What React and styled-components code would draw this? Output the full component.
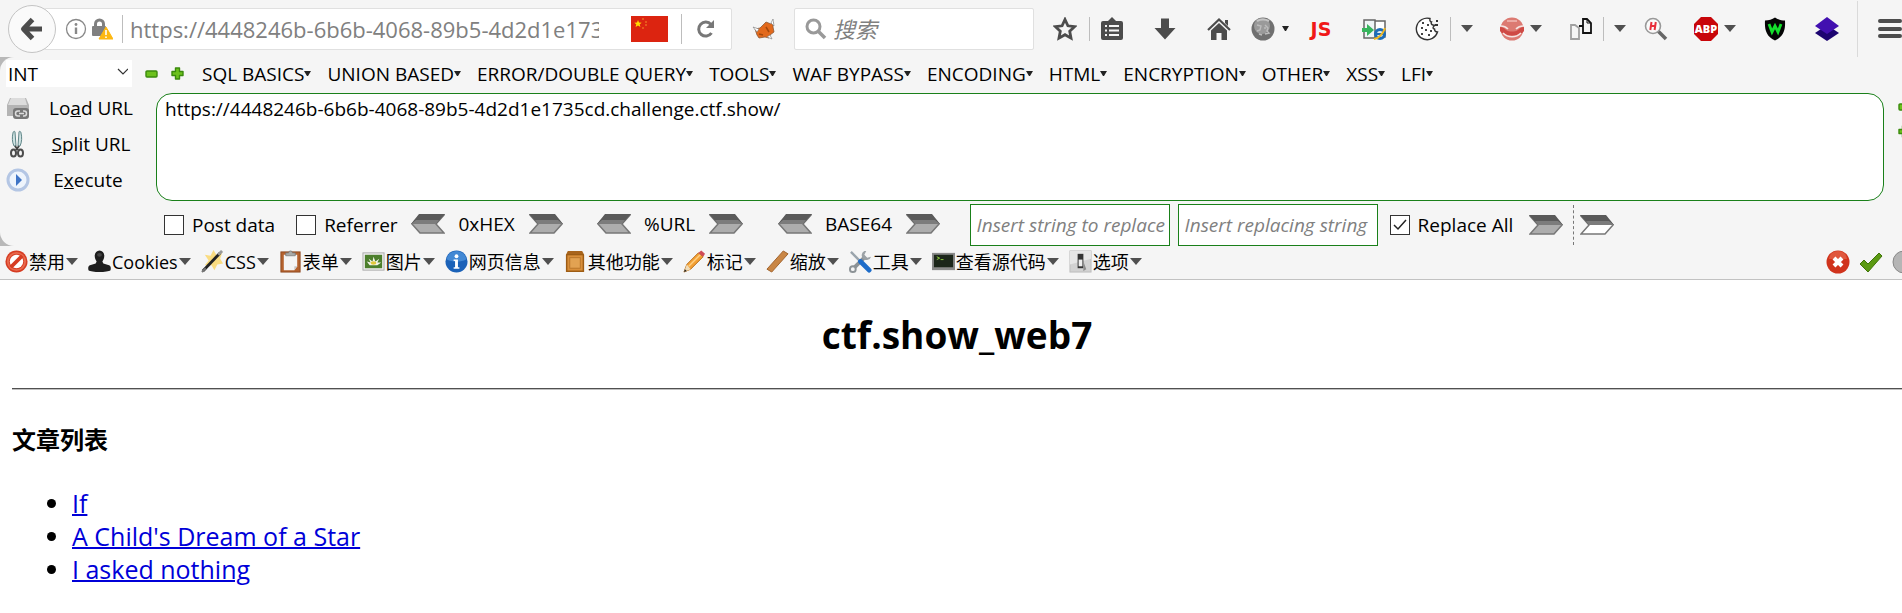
import React from "react";
import styled, { createGlobalStyle } from "styled-components";

const Global = createGlobalStyle`
  * { box-sizing: border-box; }
  body { margin: 0; background: #fff; overflow-x: hidden; font-family: "Open Sans", "Noto Sans CJK SC", sans-serif; color: #000; }
  button, input, select, textarea { font-family: inherit; color: inherit; }
  svg { display: block; flex: none; }
`;

/* ---------- shared parts ---------- */
const PlainButton = styled.button`
  display: flex;
  align-items: center;
  flex: none;
  padding: 0;
  border: 0;
  background: none;
  font-size: 19px;
  line-height: 24px;
  white-space: nowrap;
`;

const Chrome = styled.header`
  background: #f5f5f5;
  border-bottom: 1px solid #c2c2c2;
  overflow: hidden;
`;

/* ---------- navigation bar ---------- */
const NavBar = styled.div`
  display: flex;
  align-items: center;
  height: 57px;
  padding-left: 8px;
`;
const BackButton = styled.button`
  display: grid;
  place-items: center;
  width: 48px;
  height: 48px;
  flex: none;
  padding: 0;
  border: 1px solid #c4c4c4;
  border-radius: 50%;
  background: #fafafa;
  z-index: 1;
`;
const UrlBox = styled.div`
  display: flex;
  align-items: center;
  flex: 1;
  min-width: 0;
  height: 42px;
  margin-left: -12px;
  padding-left: 20px;
  border: 1px solid #e0e0e0;
  border-radius: 2px;
  background: #fff;
`;
const Divider = styled.span`
  flex: none;
  width: 1px;
  height: ${(p) => p.$h || 24}px;
  margin-left: ${(p) => p.$ml || 0}px;
  background: ${(p) => p.$color || "#bdbdbd"};
`;
const UrlInput = styled.input`
  flex: 1;
  min-width: 0;
  margin: 0 32px 0 7px;
  padding: 0;
  border: 0;
  background: none;
  font-size: 22px;
  line-height: 30px;
  color: #808080;
  outline: none;
`;
const ReloadButton = styled(PlainButton)`
  margin: 0 15px 0 14px;
`;
const SearchBox = styled.label`
  display: flex;
  align-items: center;
  gap: 6px;
  flex: none;
  width: 240px;
  height: 42px;
  margin-left: 18px;
  padding-left: 10px;
  border: 1px solid #e0e0e0;
  border-radius: 2px;
  background: #fff;
`;
const SearchInput = styled.input`
  flex: 1;
  min-width: 0;
  padding: 0;
  border: 0;
  background: none;
  font-size: 22px;
  outline: none;
  &::placeholder { color: #808080; font-style: italic; opacity: 1; }
`;
const NavButton = styled(PlainButton)`
  margin-left: ${(p) => p.$ml}px;
`;
const JsMark = styled.span`
  width: 24px;
  text-align: center;
  font: 700 19px/24px "DejaVu Sans", sans-serif;
  color: #f01818;
`;

/* ---------- hackbar ---------- */
const BarFrame = styled.section`
  background: #b8b8b8;
`;
const Bar = styled.div`
  background: #f5f5f5;
  border-radius: 14px 0 0 14px;
`;
const MenuRow = styled.div`
  display: flex;
  align-items: center;
  height: 36px;
  padding: 3px 0 6px 6px;
`;
const SelectWrap = styled.label`
  position: relative;
  flex: none;
  svg { position: absolute; right: 4px; top: 8px; pointer-events: none; }
`;
const TypeSelect = styled.select`
  display: block;
  width: 126px;
  height: 27px;
  padding: 0 2px;
  border: 0;
  appearance: none;
  background: #fff;
  font-size: 19px;
`;
const Menu = styled(PlainButton)`
  margin-right: 16px;
`;
const MenuList = styled.nav`
  display: flex;
  margin-left: 18px;
`;
const EditorRow = styled.div`
  display: grid;
  grid-template-columns: 150px minmax(0, 1fr) 18px;
  padding-left: 6px;
`;
const ActionList = styled.div`
  display: flex;
  flex-direction: column;
  gap: 12px;
  padding: 3px 0;
`;
const Action = styled(PlainButton)`
  width: 127px;
  height: 24px;
`;
const ActionLabel = styled.span`
  flex: 1;
  padding-left: ${(p) => p.$pad}px;
  text-align: center;
`;
const UrlArea = styled.textarea`
  display: block;
  width: 100%;
  height: 108px;
  padding: 3px 8px;
  border: 1px solid #1a801a;
  border-radius: 16px;
  background: #fff;
  font-size: 19px;
  line-height: 24px;
  resize: none;
  outline: none;
`;
const SideTools = styled.div`
  display: flex;
  flex-direction: column;
  gap: 12px;
  padding: 7px 0 0 14px;
  overflow: hidden;
`;
const OptionRow = styled.div`
  display: flex;
  align-items: center;
  height: 45px;
  padding: 2px 0 0 164px;
`;
const Check = styled.label`
  display: flex;
  align-items: center;
  gap: 8px;
  flex: none;
  margin-right: ${(p) => p.$mr}px;
  font-size: 19px;
  line-height: 24px;
  white-space: nowrap;
`;
const Tick = styled.input`
  appearance: none;
  width: 20px;
  height: 20px;
  margin: 0;
  border: 1px solid #333;
  background: #fff;
  &:checked {
    background: #fff url("data:image/svg+xml,%3Csvg xmlns='http://www.w3.org/2000/svg' viewBox='0 0 18 18'%3E%3Cpath d='M3 9l4 4 8-9' fill='none' stroke='%23222' stroke-width='1.5'/%3E%3C/svg%3E");
  }
`;
const Codec = styled.div`
  display: grid;
  grid-template-columns: 34px ${(p) => p.$w}px 34px;
  align-items: center;
  flex: none;
  margin-right: ${(p) => p.$mr}px;
  padding-bottom: 2px;
  text-align: center;
  font-size: 19px;
  line-height: 24px;
`;
const ReplaceInput = styled.input`
  flex: none;
  width: 200px;
  height: 42px;
  margin-right: ${(p) => p.$mr}px;
  padding: 0 0 0 6px;
  border: 1px solid #1a801a;
  background: #fff;
  font-size: 19px;
  outline: none;
  &::placeholder { color: #808080; font-style: italic; opacity: 1; }
`;
const Dashed = styled.span`
  flex: none;
  height: 40px;
  margin: 0 6px 0 10px;
  border-left: 1px dashed #777;
`;

/* ---------- developer toolbar ---------- */
const DevBar = styled.div`
  display: flex;
  align-items: center;
  height: 33px;
  padding: 0 0 2px 5px;
`;
const DevItem = styled(PlainButton)`
  gap: 1px;
  margin-right: 10px;
  font-size: 18px;
`;
const Status = styled.div`
  display: flex;
  gap: 9px;
  flex: none;
  width: 76px;
  margin-left: auto;
  overflow: hidden;
`;

/* ---------- page ---------- */
const Page = styled.main`
  padding: 0 0 24px 12px;
  font-size: 25px;
  line-height: 33px;
`;
const Title = styled.h1`
  margin: 0;
  padding: 30px 0 29px;
  text-align: center;
  font-size: 37px;
  line-height: 49px;
`;
const Rule = styled.hr`
  margin: 0;
  border: 0;
  border-top: 1px solid #505050;
  border-bottom: 1px solid #c0c0c0;
`;
const Heading = styled.h2`
  margin: 33px 0 31px;
  font-size: 24px;
  line-height: 33px;
`;
const Articles = styled.ul`
  margin: 0;
  padding-left: 60px;
  a { color: #0000d8; text-decoration-thickness: 2px; }
`;

/* ---------- icons ---------- */
const Svg = ({ w = 24, h = 24, vb, children }) => (
  <svg width={w} height={h} viewBox={vb || `0 0 ${w} ${h}`} aria-hidden="true">{children}</svg>
);
const Caret = () => <Svg w={12} h={7}><path d="M0 0h12L6 7z" fill="#505050" /></Svg>;
const SmallCaret = () => <Svg w={7} h={5}><path d="M0 0h7L4 5H3z" fill="#222" /></Svg>;
const Minus = () => <Svg w={13} h={13}><rect x="1" y="4" width="11" height="6" rx="1" fill="#6cc11c" stroke="#3a8a0c" strokeWidth="1.4" /></Svg>;
const Plus = () => <Svg w={13} h={13}><path d="M4.500 1h4v3.500H12v4H8.500V12h-4V8.500H1v-4h3.500z" fill="#6cc11c" stroke="#3a8a0c" strokeWidth="1.4" strokeLinejoin="round" /></Svg>;
const Chevron = ({ left, hollow }) => (
  <Svg w={34} h={20}>
    <g transform={left ? "translate(34 0) scale(-1 1)" : undefined}>
      <path d="M1 1h24l8 9-8 9H1l8-9z" fill={hollow ? "#fff" : "#adadad"} stroke="#777" strokeWidth="1.500" />
      <path d="M0 0h26l8 10H9z" fill="#5a5a5a" />
      <path d="M6 6h23l5 4H9z" fill="#7c7c7c" />
    </g>
  </Svg>
);

const devIcons = {
  forbid: (
    <>
      <circle cx="12" cy="12" r="11.500" fill="#d63c22" />
      <circle cx="12" cy="12" r="7" fill="#fff" />
      <circle cx="12" cy="12" r="9" fill="none" stroke="#e8694d" strokeWidth="2" />
      <path d="M6 18L18 6" stroke="#d63c22" strokeWidth="4" />
    </>
  ),
  user: (
    <>
      <path d="M7 6a5 5.500 0 0 1 10 0c0 3-1 4-2 6l1 2 6 2c2 1 2 3 1.500 5-3 2.500-20 2.500-23 0-.5-2-.5-4 1.500-5l6-2 1-2c-1-2-2-3-2-6z" fill="#1e1e1e" />
      <ellipse cx="12" cy="5" rx="2.500" ry="2" fill="#444" />
    </>
  ),
  wand: (
    <>
      <path d="M13 0l3 5 6-2-2 6 3 5-6 1-3 6-3-5-7 0 4-5-4-6 6 1z" fill="#fbd35a" opacity=".75" />
      <path d="M2 22L20 3" stroke="#222" strokeWidth="3" />
      <path d="M18 5l4-4" stroke="#999" strokeWidth="3" />
      <path d="M1 23l4-4" stroke="#777" strokeWidth="2" />
    </>
  ),
  clipboard: (
    <>
      <rect x="2" y="2" width="20" height="21" fill="#b5622e" stroke="#8f4a20" />
      <path d="M5 5h14v12l-3 4H5z" fill="#f4f4f4" />
      <path d="M19 17h-3v4z" fill="#c4c4c4" />
      <path d="M7 6V3h3a2 2 0 0 1 4 0h3v3z" fill="#a8aaa8" stroke="#777" strokeWidth=".8" />
    </>
  ),
  image: (
    <>
      <rect x="1" y="3" width="22" height="18" fill="#eee" stroke="#aaa" />
      <rect x="3" y="5" width="18" height="14" fill="#4c7f2c" />
      <path d="M5 12l4 1-2-4 4 3 1-5 2 5 4-3-2 4 4 0-4 3H8z" fill="#f4f4ea" />
      <ellipse cx="12" cy="13.500" rx="3" ry="1.800" fill="#e2c93c" />
    </>
  ),
  info: (
    <>
      <circle cx="12" cy="12" r="11.500" fill="#1b62b8" />
      <path d="M2 10a10 9 0 0 1 20 0c-5 3-15 3-20 0z" fill="#4288d4" />
      <circle cx="12" cy="6.500" r="2" fill="#fff" />
      <path d="M9 10h4.500v8H15v1.500H9V18h1.500v-6.500H9z" fill="#fff" />
    </>
  ),
  box: (
    <>
      <path d="M4 1h15l2 4v18H2V5z" fill="#a8641c" />
      <rect x="3" y="5" width="17" height="17" fill="#d98f3a" stroke="#93540f" />
      <rect x="6" y="8" width="11" height="11" fill="#e2a252" stroke="#b8752a" />
    </>
  ),
  pencil: (
    <>
      <path d="M1 23l3-8L16 3l5 4L8 20z" fill="#f3a034" stroke="#b56b16" />
      <path d="M1 23l3-8 4 5z" fill="#f0dcb8" />
      <path d="M6 17L18 5" stroke="#ffd083" strokeWidth="1.500" />
      <path d="M16 3l3-2.500L23 4l-2 3z" fill="#cf4c58" />
      <path d="M1 23l1-3 2 2z" fill="#222" />
    </>
  ),
  ruler: <path d="M1 20L18 1l5 3L6 23z" fill="#c98645" stroke="#a0622c" />,
  tools: (
    <>
      <path d="M5 19L17 7" stroke="#8c9296" strokeWidth="4" />
      <circle cx="4" cy="20" r="3" fill="#f5f5f5" stroke="#8c9296" strokeWidth="2" />
      <path d="M16 1a5 5 0 1 0 7 6l-4 1-3-3 2-4z" fill="#9ba1a5" />
      <path d="M2 2l9 9" stroke="#9aa4ac" strokeWidth="2.500" />
      <path d="M12 12l9 9" stroke="#1d6cc9" strokeWidth="5" strokeLinecap="round" />
    </>
  ),
  screen: (
    <>
      <rect x="0" y="3" width="24" height="18" fill="#8a8a8a" />
      <rect x="2" y="5" width="20" height="13" fill="#1c261a" />
      <path d="M5 7l3 1.500L5 10M9 10h3" stroke="#8fd03c" fill="none" />
    </>
  ),
  toggle: (
    <>
      <rect x="1" y="1" width="22" height="22" fill="#d2d2d2" stroke="#bdbdbd" />
      <path d="M1 1h22v8L1 15z" fill="#e6e6e6" />
      <rect x="9" y="4" width="6" height="15" fill="#333" />
      <rect x="10" y="10" width="4" height="7" fill="#eee" />
      <path d="M15 12v10l3-2z" fill="#8c8c8c" />
    </>
  ),
};

const devItems = [
  ["forbid", "禁用"], ["user", "Cookies"], ["wand", "CSS"], ["clipboard", "表单"],
  ["image", "图片"], ["info", "网页信息"], ["box", "其他功能"], ["pencil", "标记"],
  ["ruler", "缩放"], ["tools", "工具"], ["screen", "查看源代码"], ["toggle", "选项"],
];

const menus = ["SQL BASICS", "UNION BASED", "ERROR/DOUBLE QUERY", "TOOLS", "WAF BYPASS", "ENCODING", "HTML", "ENCRYPTION", "OTHER", "XSS", "LFI"];
const target = "https://4448246b-6b6b-4068-89b5-4d2d1e1735cd.challenge.ctf.show/";

function Navigation() {
  return (
    <NavBar>
      <BackButton aria-label="Back">
        <Svg><path d="M12.500 2.500L3.500 12l9 9.500M4 12h18" fill="none" stroke="#4c4c4c" strokeWidth="5" strokeLinejoin="round" /></Svg>
      </BackButton>
      <UrlBox>
        <Svg w={22} h={22}>
          <circle cx="11" cy="11" r="9.500" fill="none" stroke="#888" strokeWidth="1.300" />
          <circle cx="11" cy="6.500" r="1.400" fill="#888" />
          <path d="M11 9.500V16" stroke="#888" strokeWidth="2.400" />
        </Svg>
        <Svg w={26} h={24}>
          <path d="M8.500 11V7a4 4 0 0 1 8 0v4" fill="none" stroke="#808080" strokeWidth="3" />
          <rect x="5" y="9" width="14" height="10" rx="1" fill="#808080" />
          <path d="M19 10l7 12H12z" fill="#fdb813" stroke="#fdb813" strokeLinejoin="round" />
          <path d="M19 13v5M19 19.500v1.500" stroke="#fff" strokeWidth="1.600" />
        </Svg>
        <Divider $h={28} $ml={9} />
        <UrlInput aria-label="Address" defaultValue={target} />
        <Svg w={37} h={26}>
          <rect width="37" height="26" fill="#dc2410" />
          <path d="M7 4l1 2.500 2.700.2-2 1.600.7 2.700L7 9.500 4.600 11l.7-2.700-2-1.600L6 6.500z" fill="#fd0" />
          <path d="M11 3h2M14 6h2M14 9h2M11 12h2" stroke="#ec6a20" strokeWidth="1.500" />
        </Svg>
        <Divider $h={30} $ml={13} />
        <ReloadButton aria-label="Reload">
          <Svg w={20} h={20}>
            <path d="M15.500 14A7 7 0 1 1 15 5.500" fill="none" stroke="#777" strokeWidth="3" />
            <path d="M18 1v8h-8z" fill="#777" />
          </Svg>
        </ReloadButton>
      </UrlBox>
      <NavButton $ml={20} aria-label="FoxyProxy">
        <Svg>
          <path d="M3 12l5-1 6-6 5 2 2-2 0 5 1 5-4 3-1 3-4-1-6 1-2-3z" fill="#e2691c" stroke="#8c5a3a" strokeWidth=".8" />
          <path d="M1 10l6 2-2 3zM19 6l2-4 1 7zM15 20l5 2-2-4z" fill="#fff" stroke="#777" strokeWidth=".6" />
          <path d="M7 17l4 1M14 10l3 5" stroke="#a3480c" strokeWidth="1.500" />
        </Svg>
      </NavButton>
      <SearchBox>
        <Svg w={22} h={22}>
          <circle cx="8.500" cy="8.500" r="6.500" fill="none" stroke="#999" strokeWidth="3" />
          <path d="M13 13l7 7" stroke="#999" strokeWidth="3.500" />
        </Svg>
        <SearchInput aria-label="搜索" placeholder="搜索" />
      </SearchBox>
      <NavButton $ml={19} aria-label="Bookmark">
        <Svg><path d="M12 2.500l2.900 6.300 6.800.8-5 4.700 1.300 6.800-6-3.400-6 3.400 1.300-6.800-5-4.700 6.800-.8z" fill="none" stroke="#4c4c4c" strokeWidth="2.800" /></Svg>
      </NavButton>
      <Divider $ml={12} />
      <NavButton $ml={10} aria-label="Library">
        <Svg>
          <path d="M3 4h5l4-4 4 4h5a2 2 0 0 1 2 2v15a2 2 0 0 1-2 2H3a2 2 0 0 1-2-2V6a2 2 0 0 1 2-2z" fill="#4c4c4c" />
          <path d="M5 9h2M9 9h10M5 13.500h2M9 13.500h10M5 18h2M9 18h10" stroke="#f5f5f5" strokeWidth="2" />
        </Svg>
      </NavButton>
      <NavButton $ml={29} aria-label="Downloads">
        <Svg><path d="M8 1.500h8V11h6.500L12 22.500 1.500 11H8z" fill="#4c4c4c" /></Svg>
      </NavButton>
      <NavButton $ml={30} aria-label="Home">
        <Svg>
          <path d="M1 13L12 2.500 23 13" fill="none" stroke="#4c4c4c" strokeWidth="2.200" />
          <path d="M18 3h3v6l-3-3z" fill="#4c4c4c" />
          <path d="M4 13.500L12 6l8 7.500V23h-5.500v-7h-5v7H4z" fill="#4c4c4c" />
        </Svg>
      </NavButton>
      <NavButton $ml={20} aria-label="Proxy">
        <Svg>
          <circle cx="12" cy="12" r="11.500" fill="#707070" />
          <circle cx="11" cy="9" r="8" fill="#9a9a9a" />
          <path d="M6 8l4 1-1 4-3 1M14 8l3 3-1 3 2 2-4 1M8 17l3 1M13 11h2" fill="none" stroke="#bcbcbc" strokeWidth="1.400" />
          <path d="M6 4c4-2 8-2 12 0" fill="none" stroke="#c4c4c4" strokeWidth="2" />
        </Svg>
      </NavButton>
      <NavButton $ml={7} aria-label="Proxy options"><SmallCaret /></NavButton>
      <NavButton $ml={20} aria-label="JavaScript"><JsMark>JS</JsMark></NavButton>
      <NavButton $ml={29} aria-label="Open in IE">
        <Svg>
          <path d="M11 4h12v16H11z" fill="#fff" stroke="#666" strokeWidth="1.500" />
          <path d="M2 3h11v18H2z" fill="#eef4f6" stroke="#666" strokeWidth="1.500" />
          <path d="M0 11h5V7l7 6-7 6v-4H0z" fill="#36b45c" />
          <circle cx="18" cy="17" r="4.500" fill="#dcebf5" stroke="#1d6cb8" strokeWidth="3" />
          <path d="M15 17h6" stroke="#1d6cb8" strokeWidth="2" />
          <path d="M12 22c4 0 9-5 11-11" fill="none" stroke="#f0b822" strokeWidth="2" />
        </Svg>
      </NavButton>
      <NavButton $ml={29} aria-label="Cookies">
        <Svg>
          <path d="M15 1.500A10.800 10.800 0 1 0 22.500 15c-2 0-3-1-3-3-2 0-2-3 1-4-3 1-5-1-4-3-1 0-2-1-1.500-3.500z" fill="#fff" stroke="#333" strokeWidth="1.400" />
          <path d="M8 5v2M13 7v2M6 11h2M11 12v2M15 14h2M7 16v2M13 18h2" stroke="#444" strokeWidth="2" />
          <path d="M21 3h2v2h-2zM20 7h3v2h-3z" fill="#333" />
        </Svg>
      </NavButton>
      <Divider $ml={11} />
      <NavButton $ml={10} aria-label="More"><Caret /></NavButton>
      <NavButton $ml={27} aria-label="Gesture">
        <Svg>
          <circle cx="12" cy="12" r="11.500" fill="#dc7a72" />
          <path d="M0 10c3 0 4 1 6 3 3 2 9 2 12 0 2-2 3-3 6-3v4c-4 6-20 6-24 0z" fill="#cf4a45" />
          <path d="M1 9c4 0 5 1 7 3M23 9c-4 0-5 1-7 3M3 16c5 5 13 5 18 0" fill="none" stroke="#f6e4e2" strokeWidth="1.600" />
          <path d="M7 4h10" stroke="#ecaaa4" strokeWidth="2" />
        </Svg>
      </NavButton>
      <NavButton $ml={6} aria-label="Gesture options"><Caret /></NavButton>
      <NavButton $ml={26} aria-label="Copy pages">
        <Svg>
          <path d="M3 8h4l4 3v11H3z" fill="none" stroke="#a0a0a0" strokeWidth="1.800" />
          <path d="M15 2h4l4 4v10h-8z" fill="none" stroke="#111" strokeWidth="1.800" />
          <path d="M11 9h4" stroke="#111" strokeWidth="2" />
          <path d="M19 2v4h4" fill="none" stroke="#111" />
        </Svg>
      </NavButton>
      <Divider $ml={11} />
      <NavButton $ml={10} aria-label="More"><Caret /></NavButton>
      <NavButton $ml={18} aria-label="HackSearch">
        <Svg>
          <path d="M14 14l8 8" stroke="#666" strokeWidth="3.500" />
          <circle cx="9" cy="9" r="7.500" fill="#fafafa" stroke="#999" strokeWidth="1.600" />
          <path d="M7.500 5l-1.200 8M11.800 5l-1.200 8M7 9h4" stroke="#e8303c" strokeWidth="2" />
        </Svg>
      </NavButton>
      <NavButton $ml={26} aria-label="Adblock Plus">
        <Svg>
          <path d="M7 0h10l7 7v10l-7 7H7l-7-7V7z" fill="#c8060a" />
          <text x="12" y="16" textAnchor="middle" fontFamily="Open Sans" fontWeight="800" fontSize="11" fill="#fff">ABP</text>
        </Svg>
      </NavButton>
      <NavButton $ml={6} aria-label="Adblock options"><Caret /></NavButton>
      <NavButton $ml={27} aria-label="Wappalyzer">
        <Svg>
          <path d="M12 .5c3 2 6 3 10 3 .5 9-1 16-10 20-9-4-10.500-11-10-20 4 0 7-1 10-3z" fill="#050505" />
          <path d="M6 7l3 8 3-6 3 6 3-8" fill="none" stroke="#14e02c" strokeWidth="2.800" />
        </Svg>
      </NavButton>
      <NavButton $ml={28} aria-label="Layers">
        <Svg>
          <path d="M12 8l12 8-12 8L0 16z" fill="#1c0470" />
          <path d="M12 0l12 9-12 8L0 9z" fill="#4210b0" />
        </Svg>
      </NavButton>
      <Divider $ml={18} $h={56} $color="#dadada" />
      <NavButton $ml={20} aria-label="Menu">
        <Svg><path d="M2 4h20M2 12h20M2 19h20" stroke="#4c4c4c" strokeWidth="4" strokeLinecap="round" /></Svg>
      </NavButton>
    </NavBar>
  );
}

function CodecGroup({ name, w, mr }) {
  return (
    <Codec $w={w} $mr={mr}>
      <PlainButton aria-label={`Decode ${name}`}><Chevron left /></PlainButton>
      <span>{name}</span>
      <PlainButton aria-label={`Encode ${name}`}><Chevron /></PlainButton>
    </Codec>
  );
}

function HackBar() {
  return (
    <BarFrame>
      <Bar>
        <MenuRow>
          <SelectWrap>
            <TypeSelect aria-label="Type"><option>INT</option></TypeSelect>
            <Svg w={11} h={8}><path d="M1 1l5 5 5-5" fill="none" stroke="#333" strokeWidth="1.200" /></Svg>
          </SelectWrap>
          <NavButton $ml={13} aria-label="Remove"><Minus /></NavButton>
          <NavButton $ml={13} aria-label="Add"><Plus /></NavButton>
          <MenuList>
            {menus.map((m) => <Menu key={m}>{m}<SmallCaret /></Menu>)}
          </MenuList>
        </MenuRow>
        <EditorRow>
          <ActionList>
            <Action>
              <Svg>
                <path d="M4 2h16l3 7v11H1V9z" fill="#b4b4b4" />
                <path d="M5 2h14l2 7H2z" fill="#dcdcdc" />
                <rect x="7" y="12" width="16" height="11" rx="3" fill="#777" />
                <path d="M14 15h-2a2.500 2.500 0 0 0 0 5h2M17 15h1a2.500 2.500 0 0 1 0 5h-1M13 17.500h5" fill="none" stroke="#ddd" strokeWidth="1.500" />
              </Svg>
              <ActionLabel $pad={19}>Lo<u>a</u>d URL</ActionLabel>
            </Action>
            <Action>
              <Svg w={24} h={28}>
                <path d="M7 3c0-2 2-2 2-1l1 14H8C6 12 6 7 7 3zM15 3c0-2-2-2-2-1l-1 14h2c2-4 2-9 1-13z" fill="#cfe2e2" stroke="#5f8688" />
                <path d="M9 16l3 4M13 16l-3 4" stroke="#444" strokeWidth="2" />
                <ellipse cx="7.500" cy="23" rx="2.500" ry="3.500" fill="none" stroke="#4c4c4c" strokeWidth="2" />
                <ellipse cx="14.500" cy="23" rx="2.500" ry="3.500" fill="none" stroke="#4c4c4c" strokeWidth="2" />
              </Svg>
              <ActionLabel $pad={19}><u>S</u>plit URL</ActionLabel>
            </Action>
            <Action>
              <Svg>
                <circle cx="12" cy="12" r="10" fill="#eef4fc" stroke="#b4c6e4" strokeWidth="3" />
                <path d="M10 6l6 6-6 6z" fill="#3f74c6" />
              </Svg>
              <ActionLabel $pad={13}>E<u>x</u>ecute</ActionLabel>
            </Action>
          </ActionList>
          <UrlArea aria-label="URL" defaultValue={target} spellCheck={false} />
          <SideTools>
            <PlainButton aria-label="Shrink"><Minus /></PlainButton>
            <PlainButton aria-label="Grow"><Plus /></PlainButton>
          </SideTools>
        </EditorRow>
        <OptionRow>
          <Check $mr={21}><Tick type="checkbox" />Post data</Check>
          <Check $mr={13}><Tick type="checkbox" />Referrer</Check>
          <CodecGroup name="0xHEX" w={84} mr={34} />
          <CodecGroup name="%URL" w={78} mr={35} />
          <CodecGroup name="BASE64" w={94} mr={30} />
          <ReplaceInput aria-label="Search string" placeholder="Insert string to replace" $mr={8} />
          <ReplaceInput aria-label="Replacement string" placeholder="Insert replacing string" $mr={12} />
          <Check $mr={16}><Tick type="checkbox" defaultChecked />Replace All</Check>
          <PlainButton aria-label="Replace"><Chevron /></PlainButton>
          <Dashed />
          <PlainButton aria-label="Replace and run"><Chevron hollow /></PlainButton>
        </OptionRow>
      </Bar>
    </BarFrame>
  );
}

function DeveloperBar() {
  return (
    <DevBar>
      {devItems.map(([icon, label]) => (
        <DevItem key={icon}>
          <Svg w={23} h={23} vb="0 0 24 24">{devIcons[icon]}</Svg>
          {label}
          <Caret />
        </DevItem>
      ))}
      <Status>
        <PlainButton aria-label="Errors">
          <Svg>
            <circle cx="12" cy="12" r="11.500" fill="#d0331c" />
            <path d="M3 9a9 8 0 0 1 18 0z" fill="#e0583e" />
            <path d="M8 8l8 8M16 8l-8 8" stroke="#fff" strokeWidth="4" />
          </Svg>
        </PlainButton>
        <PlainButton aria-label="Valid">
          <Svg><path d="M1 14l4-4 4 4L20 3l3 3L9 22z" fill="#5b9a12" stroke="#3f7408" /></Svg>
        </PlainButton>
        <PlainButton aria-label="Render mode">
          <Svg><circle cx="12" cy="12" r="11" fill="#b5b5b5" stroke="#888" /></Svg>
        </PlainButton>
      </Status>
    </DevBar>
  );
}

export default function App() {
  return (
    <>
      <Global />
      <Chrome>
        <Navigation />
        <HackBar />
        <DeveloperBar />
      </Chrome>
      <Page>
        <Title>ctf.show_web7</Title>
        <Rule />
        <Heading>文章列表</Heading>
        <Articles>
          <li><a href="#if">If</a></li>
          <li><a href="#child">A Child's Dream of a Star</a></li>
          <li><a href="#asked">I asked nothing</a></li>
        </Articles>
      </Page>
    </>
  );
}
